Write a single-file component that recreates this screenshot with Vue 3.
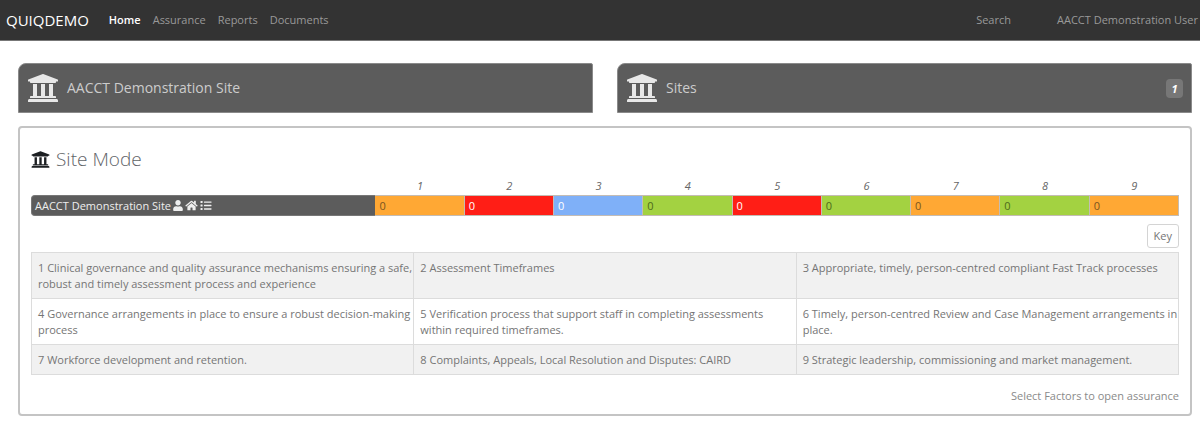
<script setup>
const navLinks = ['Home', 'Assurance', 'Reports', 'Documents']

const bankPath =
  'M496 128v16a8 8 0 0 1-8 8h-24v12c0 6.627-5.373 12-12 12H60c-6.627 0-12-5.373-12-12v-12H24a8 8 0 0 1-8-8v-16a8 8 0 0 1 4.941-7.392l232-88a7.996 7.996 0 0 1 6.118 0l232 88A8 8 0 0 1 496 128zm-24 304H40c-13.255 0-24 10.745-24 24v16a8 8 0 0 0 8 8h464a8 8 0 0 0 8-8v-16c0-13.255-10.745-24-24-24zM96 192v192H60c-6.627 0-12 5.373-12 12v20h416v-20c0-6.627-5.373-12-12-12h-36V192h-64v192h-64V192h-64v192h-64V192H96z'

const scores = [
  { factor: 1, value: 0, tone: 'amber' },
  { factor: 2, value: 0, tone: 'red' },
  { factor: 3, value: 0, tone: 'blue' },
  { factor: 4, value: 0, tone: 'green' },
  { factor: 5, value: 0, tone: 'red' },
  { factor: 6, value: 0, tone: 'green' },
  { factor: 7, value: 0, tone: 'amber' },
  { factor: 8, value: 0, tone: 'green' },
  { factor: 9, value: 0, tone: 'amber' },
]

const factorRows = [
  [
    '1 Clinical governance and quality assurance mechanisms ensuring a safe, robust and timely assessment process and experience',
    '2 Assessment Timeframes',
    '3 Appropriate, timely, person-centred compliant Fast Track processes',
  ],
  [
    '4 Governance arrangements in place to ensure a robust decision-making process',
    '5 Verification process that support staff in completing assessments within required timeframes.',
    '6 Timely, person-centred Review and Case Management arrangements in place.',
  ],
  [
    '7 Workforce development and retention.',
    '8 Complaints, Appeals, Local Resolution and Disputes: CAIRD',
    '9 Strategic leadership, commissioning and market management.',
  ],
]
</script>

<template>
  <div class="page">
    <header class="navbar">
      <a class="brand" href="#">QUIQDEMO</a>
      <nav class="links">
        <a v-for="(link, i) in navLinks" :key="link" href="#" :class="{ active: i === 0 }">{{ link }}</a>
      </nav>
      <div class="account">
        <a href="#">Search</a>
        <a href="#">AACCT Demonstration User</a>
      </div>
    </header>

    <main class="content">
      <div class="cards">
        <a class="card" href="#">
          <svg class="bank" viewBox="0 0 512 512" aria-hidden="true"><path :d="bankPath" /></svg>
          <span>AACCT Demonstration Site</span>
        </a>
        <a class="card" href="#">
          <svg class="bank" viewBox="0 0 512 512" aria-hidden="true"><path :d="bankPath" /></svg>
          <span>Sites</span>
          <span class="badge">1</span>
        </a>
      </div>

      <section class="panel">
        <h1 class="title">
          <svg class="bank-small" viewBox="0 0 512 512" aria-hidden="true"><path :d="bankPath" /></svg>
          <span>Site Mode</span>
        </h1>

        <table class="scores">
          <thead>
            <tr>
              <td class="name-col"></td>
              <th v-for="s in scores" :key="s.factor" scope="col">{{ s.factor }}</th>
            </tr>
          </thead>
          <tbody>
            <tr>
              <th class="site" scope="row">
                <div class="site-inner">
                  <span>AACCT Demonstration Site</span>
                  <svg class="icon-user" viewBox="0 0 448 512" aria-hidden="true">
                    <path d="M224 256c70.7 0 128-57.3 128-128S294.7 0 224 0 96 57.3 96 128s57.3 128 128 128zm89.6 32h-16.7c-22.2 10.2-46.9 16-72.9 16s-50.6-5.8-72.9-16h-16.7C60.2 288 0 348.2 0 422.4V464c0 26.5 21.5 48 48 48h352c26.5 0 48-21.5 48-48v-41.6c0-74.2-60.2-134.4-134.4-134.4z" />
                  </svg>
                  <svg class="icon-home" viewBox="0 0 576 512" aria-hidden="true">
                    <path d="M280.37 148.26L96 300.11V464a16 16 0 0 0 16 16l112.06-.29a16 16 0 0 0 15.92-16V368a16 16 0 0 1 16-16h64a16 16 0 0 1 16 16v95.64a16 16 0 0 0 16 16.05L464 480a16 16 0 0 0 16-16V300L295.67 148.26a12.19 12.19 0 0 0-15.3 0zM571.6 251.47L488 182.56V44.05a12 12 0 0 0-12-12h-56a12 12 0 0 0-12 12v72.61L318.47 43a48 48 0 0 0-61 0L4.34 251.47a12 12 0 0 0-1.6 16.9l25.5 31A12 12 0 0 0 45.15 301l235.22-193.74a12.19 12.19 0 0 1 15.3 0L530.9 301a12 12 0 0 0 16.9-1.6l25.5-31a12 12 0 0 0-1.7-16.93z" />
                  </svg>
                  <svg class="icon-list" viewBox="0 0 512 512" aria-hidden="true">
                    <rect x="0" y="48" width="96" height="96" rx="16" />
                    <rect x="0" y="208" width="96" height="96" rx="16" />
                    <rect x="0" y="368" width="96" height="96" rx="16" />
                    <rect x="160" y="64" width="352" height="64" rx="16" />
                    <rect x="160" y="224" width="352" height="64" rx="16" />
                    <rect x="160" y="384" width="352" height="64" rx="16" />
                  </svg>
                </div>
              </th>
              <td v-for="s in scores" :key="s.factor" :class="['score', s.tone]">{{ s.value }}</td>
            </tr>
          </tbody>
        </table>

        <div class="toolbar">
          <button class="key" type="button">Key</button>
        </div>

        <table class="factors">
          <tbody>
            <tr v-for="(row, i) in factorRows" :key="i">
              <td v-for="text in row" :key="text">{{ text }}</td>
            </tr>
          </tbody>
        </table>

        <p class="hint">Select Factors to open assurance</p>
      </section>
    </main>
  </div>
</template>

<style>
body {
  margin: 0;
  background: #fff;
}
</style>

<style scoped>
.page {
  font-family: "Open Sans", "Noto Sans", sans-serif;
  font-size: 11px;
  line-height: 16px;
  color: #757575;
}

a {
  text-decoration: none;
  color: inherit;
}

.navbar {
  display: flex;
  align-items: center;
  height: 40px;
  padding: 0 2px 0 6px;
  background: #333;
  border-bottom: 1px solid #777;
  color: #999;
}

.brand {
  font-size: 15px;
  color: #fff;
}

.links {
  display: flex;
  gap: 12px;
  margin-left: 20px;
}

.links .active {
  color: #fff;
  font-weight: 600;
}

.account {
  display: flex;
  gap: 46px;
  margin-left: auto;
}

.content {
  padding: 22px 8px 6px 18px;
}

.cards {
  display: grid;
  grid-template-columns: 1fr 1fr;
  gap: 24px;
}

.card {
  display: flex;
  align-items: center;
  gap: 8px;
  height: 48px;
  padding: 0 8px;
  background: #5c5c5c;
  border: 1px solid #8a8a8a;
  border-radius: 8px 2px 0 0;
  font-size: 14px;
  color: #ccc;
}

.bank {
  width: 32px;
  height: 32px;
  fill: #e8e8e8;
}

.badge {
  margin-left: auto;
  width: 17px;
  line-height: 19px;
  border-radius: 4px;
  background: #777;
  color: #fff;
  font-size: 11px;
  font-style: italic;
  font-weight: 700;
  text-align: center;
}

.panel {
  margin-top: 13px;
  padding: 19px 11px 10px;
  border: 2px solid #c4c4c4;
  border-radius: 4px;
}

.title {
  display: flex;
  align-items: center;
  gap: 6px;
  margin: 0;
  font-size: 19px;
  line-height: 24px;
  font-weight: 300;
  color: #5f6468;
}

.bank-small {
  width: 19px;
  height: 19px;
  fill: #1c1f22;
}

.scores {
  width: 100%;
  margin-top: 6px;
  table-layout: fixed;
  border-collapse: separate;
  border-spacing: 0;
}

.scores th,
.scores td {
  padding: 0;
}

.scores .name-col {
  width: 30%;
}

.scores thead th {
  line-height: 18px;
  font-style: italic;
  font-weight: 400;
  text-align: center;
  color: #666;
}

.site {
  background: #5c5c5c;
  border: 1px solid #777;
  border-right: 0;
  border-radius: 4px 0 0 4px;
  color: #eee;
  font-weight: 400;
}

.site-inner {
  display: flex;
  align-items: center;
  gap: 2px;
  padding-left: 3px;
}

.site-inner svg {
  height: 11px;
  fill: #eee;
}

.icon-user {
  width: 10px;
}

.icon-home {
  width: 13px;
}

.icon-list {
  width: 12px;
}

.scores .score {
  padding-left: 4px;
  line-height: 19px;
  border: 1px solid #c4bcb4;
  border-left-width: 0;
}

.amber {
  background: #ffa834;
  color: #7a5520;
}

.red {
  background: #ff1e16;
  color: #fff;
}

.blue {
  background: #7fb0f8;
  color: #fff;
}

.green {
  background: #a3d241;
  color: #4e6a1c;
}

.toolbar {
  display: flex;
  justify-content: flex-end;
  margin: 8px 0 4px;
}

.key {
  padding: 3px 6px;
  border: 1px solid #d4d4d4;
  border-radius: 3px;
  background: #fff;
  font: inherit;
  color: #757575;
}

.factors {
  width: 100%;
  table-layout: fixed;
  border-collapse: collapse;
}

.factors td {
  padding: 7px 0 6px 6px;
  border: 1px solid #dcdcdc;
  vertical-align: top;
}

.factors tr:nth-child(odd) {
  background: #f1f1f1;
}

.hint {
  margin: 13px 0 0;
  text-align: right;
  color: #8a8a8a;
}
</style>
